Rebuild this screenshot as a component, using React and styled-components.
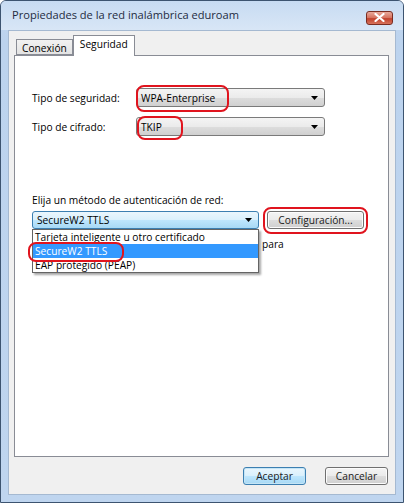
import React from 'react'
import styled, { createGlobalStyle } from 'styled-components'

const GlobalStyle = createGlobalStyle`
  body {
    margin: 0;
    font-family: "Open Sans", "Noto Sans", sans-serif;
    font-size: 10.2px;
    color: #000;
  }
`

const methods = [
  'Tarjeta inteligente u otro certificado',
  'SecureW2 TTLS',
  'EAP protegido (PEAP)',
]

function Arrow() {
  return (
    <svg width="7" height="4" viewBox="0 0 7 4">
      <path d="M0 0h7L3.5 4z" fill="#000" />
    </svg>
  )
}

function App() {
  return (
    <>
      <GlobalStyle />
      <Window>
        <TitleBar>
          <Title>Propiedades de la red inalámbrica eduroam</Title>
          <CloseButton>
            <svg width="11" height="9" viewBox="0 0 11 9">
              <path d="M1.5 1l8 7M9.5 1l-8 7" stroke="#fff" strokeWidth="2.2" strokeLinecap="round" />
            </svg>
          </CloseButton>
        </TitleBar>
        <Client>
          <TabStrip>
            <Tab>Conexión</Tab>
            <Tab $active>Seguridad</Tab>
          </TabStrip>
          <Panel>
            <FieldRow>
              <Label>Tipo de seguridad:</Label>
              <Combo>
                <span>WPA-Enterprise</span>
                <Arrow />
                <Ring $left={-1} $top={-4} $w={93} $h={27} />
              </Combo>
            </FieldRow>
            <FieldRow>
              <Label>Tipo de cifrado:</Label>
              <Combo>
                <span>TKIP</span>
                <Arrow />
                <Ring $left={0} $top={-2} $w={46} $h={24} />
              </Combo>
            </FieldRow>

            <Caption>Elija un método de autenticación de red:</Caption>
            <MethodRow>
              <Picker>
                <Combo $open $width={227}>
                  <span>SecureW2 TTLS</span>
                  <Arrow />
                </Combo>
                <List>
                  {methods.map((m, i) => (
                    <Item key={m} $selected={i === 1}>
                      {m}
                      {i === 1 && <Ring $left={-5} $top={-2} $w={96} $h={20} />}
                    </Item>
                  ))}
                </List>
              </Picker>
              <Button $width={97}>
                Configuración...
                <Ring $left={-5} $top={-5} $w={105} $h={27} />
              </Button>
            </MethodRow>
            {/* only the tail of the cache option shows past the open list */}
            <CheckRow>para</CheckRow>
          </Panel>
          <Footer>
            <Button $default $width={63}>Aceptar</Button>
            <Button $width={63}>Cancelar</Button>
          </Footer>
        </Client>
      </Window>
    </>
  )
}

const Window = styled.div`
  width: 404px;
  height: 503px;
  box-sizing: border-box;
  border: 1px solid #3d5470;
  border-radius: 6px 6px 0 0;
  background: linear-gradient(#c3d7ef, #bcd3ee 40px, #bfd5ef);
  display: flex;
  flex-direction: column;
  overflow: hidden;
`

const TitleBar = styled.div`
  height: 29px;
  display: flex;
  align-items: center;
  justify-content: space-between;
  padding: 0 10px 0 11px;
  background: linear-gradient(#c7dbf2, #d8e6f6);
`

const Title = styled.div`
  font-size: 11.1px;
  color: #1e2b3f;
  padding-bottom: 3px;
`

const CloseButton = styled.div`
  width: 27px;
  height: 14px;
  box-sizing: border-box;
  margin-top: 4px;
  border: 1px solid #7a2d22;
  border-radius: 3px;
  background: linear-gradient(#e9a99b, #d5705d 50%, #c1412c 55%, #d7735c);
  display: flex;
  align-items: center;
  justify-content: center;
`

const Client = styled.div`
  flex: 1;
  margin: 0 7px 7px 7px;
  border: 1px solid #a5b9d1;
  background: #f0f0f0;
  padding: 3px 7px 0 5px;
  display: flex;
  flex-direction: column;
`

const TabStrip = styled.div`
  display: flex;
  align-items: flex-end;
  padding-left: 2px;
  height: 21px;
  position: relative;
  z-index: 1;
`

const Tab = styled.div`
  box-sizing: border-box;
  height: ${p => (p.$active ? '21px' : '16px')};
  padding: ${p => (p.$active ? '2px 6px 0' : '2px 5px 0')};
  margin-bottom: ${p => (p.$active ? '-1px' : '0')};
  border: 1px solid #898c95;
  border-bottom: ${p => (p.$active ? 'none' : '1px solid #898c95')};
  background: ${p => (p.$active ? '#fff' : 'linear-gradient(#f2f2f2, #e3e3e3)')};
  line-height: 13px;
  color: #000;
`

const Panel = styled.div`
  box-sizing: border-box;
  width: 375px;
  height: 402px;
  background: #fff;
  border: 1px solid #898c95;
  padding: 32px 0 0 17px;
  display: flex;
  flex-direction: column;
  align-items: flex-start;
  position: relative;
`

const FieldRow = styled.div`
  display: flex;
  align-items: center;
  margin-bottom: 10px;
`

const Label = styled.div`
  width: 104px;
`

const Combo = styled.div`
  position: relative;
  box-sizing: border-box;
  width: ${p => p.$width || 189}px;
  height: ${p => (p.$open ? 18 : 19)}px;
  border: 1px solid ${p => (p.$open ? '#3c7fb1' : '#7a7a7a')};
  border-radius: 3px;
  background: ${p =>
    p.$open
      ? 'linear-gradient(#eaf6fd, #d9f0fc 50%, #bee6fd 51%, #a7d9f5)'
      : 'linear-gradient(#f4f4f4, #ebebeb 50%, #dddddd 51%, #d0d0d0)'};
  display: flex;
  align-items: center;
  justify-content: space-between;
  padding: 0 6px 0 4px;
`

const Ring = styled.div`
  position: absolute;
  left: ${p => p.$left}px;
  top: ${p => p.$top}px;
  width: ${p => p.$w}px;
  height: ${p => p.$h}px;
  box-sizing: border-box;
  border: 2px solid #e0141e;
  border-radius: 8px;
  pointer-events: none;
  z-index: 3;
`

const Caption = styled.div`
  margin-top: 48px;
  line-height: 13px;
`

const MethodRow = styled.div`
  display: flex;
  align-items: flex-start;
  gap: 8px;
  margin-top: 4px;
`

const Picker = styled.div`
  position: relative;
`

const List = styled.div`
  position: absolute;
  top: 18px;
  left: 0;
  width: 227px;
  box-sizing: border-box;
  background: #fff;
  border: 1px solid #646464;
  box-shadow: 2px 2px 2px rgba(0, 0, 0, 0.35);
  z-index: 2;
`

const Item = styled.div`
  position: relative;
  height: 14px;
  line-height: 14px;
  padding-left: 2px;
  white-space: nowrap;
  background: ${p => (p.$selected ? '#3399ff' : 'transparent')};
  color: ${p => (p.$selected ? '#fff' : '#000')};
`

const Button = styled.div`
  position: relative;
  box-sizing: border-box;
  width: ${p => p.$width}px;
  height: 18px;
  border: 1px solid ${p => (p.$default ? '#3c7fb1' : '#707070')};
  border-radius: 3px;
  background: ${p =>
    p.$default
      ? 'linear-gradient(#eaf6fd, #d9f0fc 50%, #bee6fd 51%, #a7d9f5)'
      : 'linear-gradient(#f4f4f4, #ebebeb 50%, #dddddd 51%, #cfcfcf)'};
  box-shadow: ${p => (p.$default ? 'inset 0 0 0 1px #c4e5f6' : 'inset 0 0 0 1px #fcfcfc')};
  display: flex;
  align-items: center;
  justify-content: center;
  color: #1a1a1a;
`

const CheckRow = styled.div`
  margin-top: 9px;
  padding-left: 230px;
  line-height: 13px;
  white-space: nowrap;
`

const Footer = styled.div`
  display: flex;
  justify-content: flex-end;
  gap: 19px;
  margin-top: 10px;
`

export default App
